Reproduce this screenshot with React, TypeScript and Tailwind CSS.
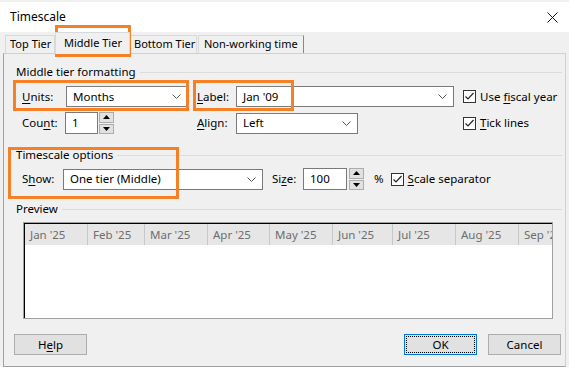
import type { ReactNode } from "react";

const font = { fontFamily: '"Segoe UI", "Noto Sans", sans-serif' };

function Acc({ children }: { children: ReactNode }) {
  return <span className="underline underline-offset-2">{children}</span>;
}

function Chevron() {
  return (
    <svg width="9" height="5" viewBox="0 0 9 5" className="shrink-0">
      <path d="M0.5 0.5 L4.5 4.5 L8.5 0.5" fill="none" stroke="#555" strokeWidth="1" />
    </svg>
  );
}

function Combo({ value, width }: { value: string; width: string }) {
  return (
    <div className={`${width} h-[21px] bg-white border border-[#7a7a7a] flex items-center justify-between pl-[6px] pr-[6px]`}>
      <span>{value}</span>
      <Chevron />
    </div>
  );
}

function Spin() {
  return (
    <div className="w-[15px] h-[22px] flex flex-col gap-[1px]">
      <div className="flex-1 bg-[#e1e1e1] border border-[#adadad] flex items-center justify-center">
        <svg width="7" height="4" viewBox="0 0 7 4">
          <path d="M0 4 L3.5 0 L7 4 Z" fill="#000" />
        </svg>
      </div>
      <div className="flex-1 bg-[#e1e1e1] border border-[#adadad] flex items-center justify-center">
        <svg width="7" height="4" viewBox="0 0 7 4">
          <path d="M0 0 L3.5 4 L7 0 Z" fill="#000" />
        </svg>
      </div>
    </div>
  );
}

function Check({ children }: { children: ReactNode }) {
  return (
    <div className="flex items-center gap-[4px]">
      <div className="w-[13px] h-[13px] bg-white border border-[#333] flex items-center justify-center">
        <svg width="11" height="11" viewBox="0 0 11 11">
          <path d="M1.5 5.5 L4 8 L9.5 2" fill="none" stroke="#222" strokeWidth="1.2" />
        </svg>
      </div>
      <span>{children}</span>
    </div>
  );
}

function Heading({ title }: { title: string }) {
  return (
    <div className="h-[16px] ml-[12px] mr-[3px] flex items-center gap-[4px]">
      <span className="whitespace-nowrap">{title}</span>
      <div className="flex-1 border-t border-[#dcdcdc]" />
    </div>
  );
}

const months = [
  { label: "Jan '25", w: "w-[63px]" },
  { label: "Feb '25", w: "w-[57px]" },
  { label: "Mar '25", w: "w-[63px]" },
  { label: "Apr '25", w: "w-[62px]" },
  { label: "May '25", w: "w-[63px]" },
  { label: "Jun '25", w: "w-[60px]" },
  { label: "Jul '25", w: "w-[63px]" },
  { label: "Aug '25", w: "w-[63px]" },
  { label: "Sep '25", w: "w-[63px]" },
];

export default function App() {
  return (
    <div className="relative w-[569px] h-[367px] bg-[#f0f0f0] overflow-hidden text-[11.5px] text-black flex flex-col" style={font}>
      {/* title bar */}
      <div className="h-[32px] bg-white border-t-2 border-[#f0f0f0] flex items-center justify-between pl-[10px] pr-[11px] shrink-0">
        <span className="text-[12px]">Timescale</span>
        <svg width="11" height="11" viewBox="0 0 11 11">
          <path d="M0.5 0.5 L10.5 10.5 M10.5 0.5 L0.5 10.5" stroke="#111" strokeWidth="1" />
        </svg>
      </div>

      {/* tabs */}
      <div className="h-[21px] flex items-end pl-[5px] shrink-0 text-[11px]">
        <div className="w-[50px] h-[18px] pl-[4px] border border-b-0 border-[#d9d9d9] flex items-center whitespace-nowrap">Top Tier</div>
        <div className="w-[75px] h-[22px] -mb-[1px] pl-[8px] border border-b-0 border-[#d9d9d9] bg-[#f0f0f0] flex items-center whitespace-nowrap relative z-10">
          Middle Tier
        </div>
        <div className="w-[67px] h-[18px] pl-[3px] border border-b-0 border-[#d9d9d9] flex items-center whitespace-nowrap">Bottom Tier</div>
        <div className="w-[106px] h-[18px] ml-[1px] pl-[5px] border border-b-0 border-[#d9d9d9] border-r-[#888] flex items-center whitespace-nowrap">
          Non-working time
        </div>
      </div>

      {/* tab page */}
      <div className="flex-1 mx-[3px] border border-[#d0d0d0] border-b-[#a0a0a0] border-l-[#a0a0a0] flex flex-col">
        <div className="mt-[10px]">
          <Heading title="Middle tier formatting" />
        </div>

        <div className="mt-[6px] h-[21px] flex items-center pl-[18px]">
          <span className="w-[44px]"><Acc>U</Acc>nits:</span>
          <Combo value="Months" width="w-[122px]" />
          <span className="w-[39px] ml-[9px]"><Acc>L</Acc>abel:</span>
          <Combo value="Jan '09" width="w-[218px]" />
          <div className="ml-[9px]">
            <Check>Use <Acc>f</Acc>iscal year</Check>
          </div>
        </div>

        <div className="mt-[5px] h-[22px] flex items-center pl-[18px]">
          <span className="w-[43px]">Cou<Acc>n</Acc>t:</span>
          <div className="w-[33px] h-[22px] bg-white border border-[#7a7a7a] flex items-center pl-[6px]">1</div>
          <div className="ml-[1px]"><Spin /></div>
          <span className="w-[39px] ml-[83px]"><Acc>A</Acc>lign:</span>
          <Combo value="Left" width="w-[122px]" />
          <div className="ml-[105px]">
            <Check><Acc>T</Acc>ick lines</Check>
          </div>
        </div>

        <div className="mt-[13px]">
          <Heading title="Timescale options" />
        </div>

        <div className="mt-[5px] h-[22px] flex items-center pl-[18px]">
          <span className="w-[41px]">S<Acc>h</Acc>ow:</span>
          <Combo value="One tier (Middle)" width="w-[200px]" />
          <span className="w-[31px] ml-[9px]">Si<Acc>z</Acc>e:</span>
          <div className="w-[44px] h-[22px] bg-white border border-[#7a7a7a] flex items-center pl-[6px]">100</div>
          <div className="ml-[2px]"><Spin /></div>
          <span className="ml-[10px]">%</span>
          <div className="ml-[7px]">
            <Check><Acc>S</Acc>cale separator</Check>
          </div>
        </div>

        <div className="mt-[11px]">
          <Heading title="Preview" />
        </div>

        {/* preview */}
        <div className="mt-[5px] ml-[19px] w-[530px] h-[97px] border border-[#a0a0a0]">
          <div className="h-full border-t border-l border-black bg-white flex flex-col">
            <div className="h-[21px] bg-[#e6e6e6] flex overflow-hidden text-[#6d6d6d]">
              {months.map((m, i) => (
                <div
                  key={m.label}
                  className={`${m.w} shrink-0 pl-[5px] flex items-center whitespace-nowrap ${i < months.length - 1 ? "border-r border-[#c8c8c8]" : ""}`}
                >
                  {m.label}
                </div>
              ))}
            </div>
          </div>
        </div>

        {/* buttons */}
        <div className="mt-[15px] flex justify-between pl-[10px] pr-[4px]">
          <button className="w-[73px] h-[21px] bg-[#e1e1e1] border border-[#adadad]">
            H<Acc>e</Acc>lp
          </button>
          <div className="flex gap-[11px]">
            <button className="w-[73px] h-[21px] bg-[#e1e1e1] border border-[#0078d7] p-[1px]">
              <div className="w-full h-full border border-dotted border-black flex items-center justify-center">OK</div>
            </button>
            <button className="w-[73px] h-[21px] bg-[#e1e1e1] border border-[#adadad]">Cancel</button>
          </div>
        </div>
      </div>

      {/* orange annotation boxes */}
      <div className="absolute left-[55px] top-[25px] w-[76px] h-[32px] border-[3px] border-[#f58025] pointer-events-none" />
      <div className="absolute left-[13px] top-[80px] w-[176px] h-[31px] border-[3px] border-[#f58025] pointer-events-none" />
      <div className="absolute left-[193px] top-[80px] w-[101px] h-[31px] border-[3px] border-[#f58025] pointer-events-none" />
      <div className="absolute left-[8px] top-[147px] w-[171px] h-[52px] border-[3px] border-[#f58025] pointer-events-none" />
    </div>
  );
}
